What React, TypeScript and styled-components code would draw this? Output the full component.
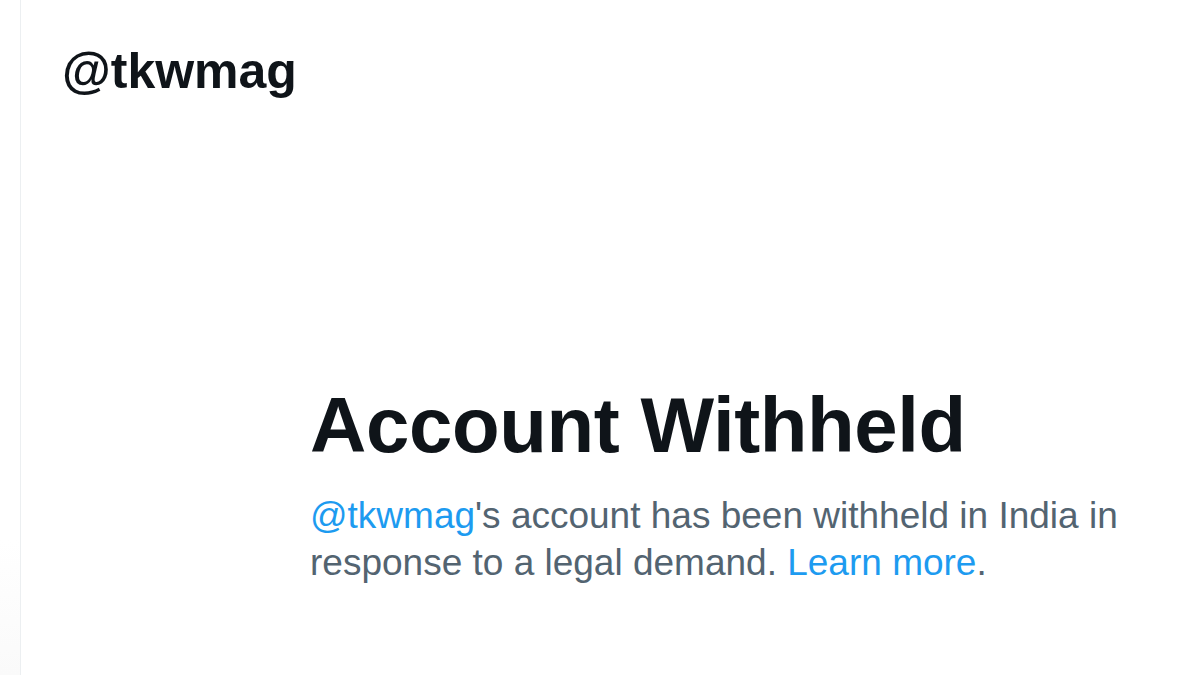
import React from "react";
import styled, { createGlobalStyle } from "styled-components";

const GlobalStyle = createGlobalStyle`
	html, body {
		margin: 0;
		padding: 0;
		background: #ffffff;
	}
	body {
		font-family: "Liberation Sans", Arial, sans-serif;
		-webkit-font-smoothing: antialiased;
	}
`;

const Page = styled.div`
	width: 1200px;
	height: 675px;
	overflow: hidden;
	display: flex;
	background: #ffffff;
`;

const Gutter = styled.div`
	width: 20px;
	flex-shrink: 0;
	background: linear-gradient(180deg, #ffffff 0%, #ffffff 80%, #fafafa 100%);
`;

const Column = styled.main`
	flex: 1;
	border-left: 1px solid #eceff1;
	display: flex;
	flex-direction: column;
`;

const Header = styled.header`
	padding: 46px 0 0 41px;
	height: 82px;
`;

const Handle = styled.h2`
	margin: 0;
	font-size: 50px;
	font-weight: 700;
	color: #0f1419;
	line-height: 1;
`;

const Notice = styled.section`
	padding: 258px 0 0 289px;
	max-width: 860px;
`;

const Title = styled.h1`
	margin: 0;
	font-size: 78px;
	font-weight: 700;
	color: #0f1419;
	line-height: 1;
	letter-spacing: -0.4px;
`;

const Body = styled.p`
	margin: 28px 0 0;
	font-size: 37px;
	line-height: 47px;
	color: #536471;
`;

const BlueLink = styled.a`
	color: #1d9bf0;
	text-decoration: none;
`;

export default function App() {
	return (
		<>
			<GlobalStyle />
			<Page>
				<Gutter />
				<Column>
					<Header>
						<Handle>@tkwmag</Handle>
					</Header>
					<Notice>
						<Title>Account Withheld</Title>
						<Body>
							<BlueLink href="#">@tkwmag</BlueLink>'s account has been withheld in
							India in response to a legal demand.{" "}
							<BlueLink href="#">Learn more</BlueLink>.
						</Body>
					</Notice>
				</Column>
			</Page>
		</>
	);
}
